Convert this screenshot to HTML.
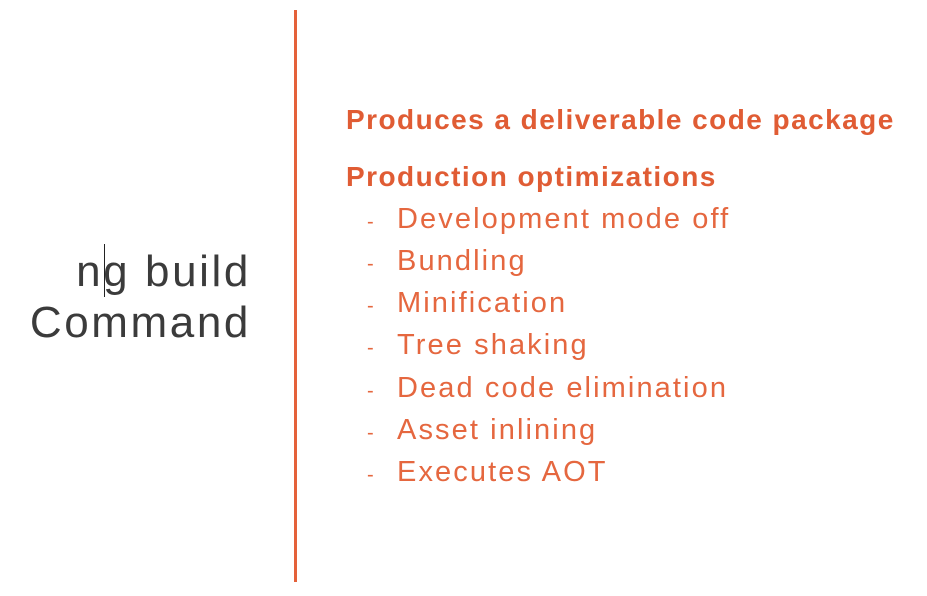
<!DOCTYPE html>
<html><head><meta charset="utf-8"><style>
body{margin:0;width:927px;height:596px;background:#fff;position:relative;overflow:hidden;font-family:"Liberation Sans",sans-serif}
.a{position:absolute;line-height:1;white-space:nowrap}
.h{color:#e05c34;font-weight:bold;font-size:28px;letter-spacing:1.45px;left:346px}
.b{color:#e5673f;font-size:29px;letter-spacing:2.1px;left:397px}
.d{color:#e5673f;font-size:20px;left:367px}
.l{color:#3b3b3b;font-size:44px;right:676px;letter-spacing:2.6px}
</style></head><body>
<div style="position:absolute;left:294px;top:10px;width:3px;height:572px;background:#e4613a"></div>
<div class="a l" style="top:250px">ng build</div>
<div class="a l" style="top:301px">Command</div>
<div style="position:absolute;left:104px;top:244px;width:1px;height:53px;background:#222"></div>
<div class="a h" style="top:106px">Produces a deliverable code package</div>
<div class="a h" style="top:163px">Production optimizations</div>
<div class="a d" style="top:212px">-</div><div class="a b" style="top:205px">Development mode off</div>
<div class="a d" style="top:254px">-</div><div class="a b" style="top:247px">Bundling</div>
<div class="a d" style="top:296px">-</div><div class="a b" style="top:289px">Minification</div>
<div class="a d" style="top:338px">-</div><div class="a b" style="top:331px">Tree shaking</div>
<div class="a d" style="top:381px">-</div><div class="a b" style="top:374px">Dead code elimination</div>
<div class="a d" style="top:423px">-</div><div class="a b" style="top:416px">Asset inlining</div>
<div class="a d" style="top:465px">-</div><div class="a b" style="top:458px">Executes AOT</div>
</body></html>
